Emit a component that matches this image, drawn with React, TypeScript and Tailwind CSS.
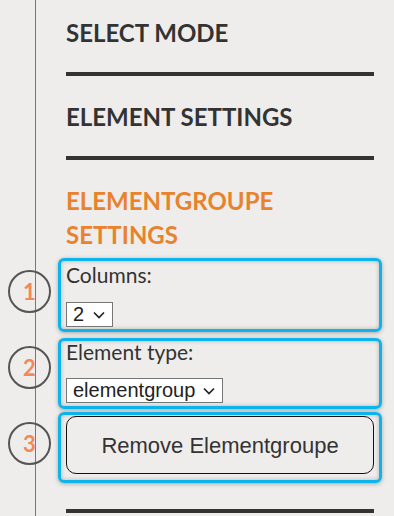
import { useState } from "react";

const MARKERS = [
  { n: "1", top: "top-[270px]" },
  { n: "2", top: "top-[346px]" },
  { n: "3", top: "top-[422px]" },
];

function Chevron() {
  return (
    <svg width="12" height="8" viewBox="0 0 12 8" className="pointer-events-none absolute right-[8px] top-[9px]">
      <path d="M1 1.5l5 5 5-5" fill="none" stroke="#222" strokeWidth="1.7" />
    </svg>
  );
}

export default function App() {
  const [columns, setColumns] = useState("2");
  const [elementType, setElementType] = useState("elementgroup");

  return (
    <div className="relative flex h-[516px] w-[394px] overflow-hidden bg-[#efedeb] font-['Lato',sans-serif] text-[#333]">
      <div className="w-[36px] shrink-0 border-r border-[#777]" />

      <div className="flex flex-1 flex-col pl-[30px] pr-[20px]">
        <section className="pt-[16px] pb-[22px]">
          <h2 className="text-[24px] leading-[34px] font-bold">SELECT MODE</h2>
        </section>
        <div className="h-1 bg-[#333]" />

        <section className="pt-[24px] pb-[22px]">
          <h2 className="text-[24px] leading-[34px] font-bold">ELEMENT SETTINGS</h2>
        </section>
        <div className="h-1 bg-[#333]" />

        <section className="pt-[24px] pb-[6px]">
          <h2 className="text-[24px] leading-[34px] font-bold text-[#e8822c]">
            ELEMENTGROUPE
            <br />
            SETTINGS
          </h2>
        </section>

        <div className="-mx-2 rounded-[6px] border-[3px] border-[#0db4ec] px-[5px] pt-0 pb-[2px] shadow-[inset_0_0_4px_rgba(0,0,0,0.25),0_1px_4px_rgba(0,0,0,0.3)]">
          <label className="block text-[21px] leading-[28px]">Columns:</label>
          <div className="relative mt-[13px] inline-block">
            <select
              value={columns}
              onChange={(e) => setColumns(e.target.value)}
              className="h-[25px] w-[47px] appearance-none border border-[#767676] bg-white pl-[6px] font-['Liberation_Sans',Arial,sans-serif] text-[20px] leading-[23px] text-[#222] outline-none"
            >
              <option>1</option>
              <option>2</option>
              <option>3</option>
            </select>
            <Chevron />
          </div>
        </div>

        <div className="-mx-2 mt-[6px] rounded-[6px] border-[3px] border-[#0db4ec] px-[5px] pt-0 pb-[3px] shadow-[inset_0_0_4px_rgba(0,0,0,0.25),0_1px_4px_rgba(0,0,0,0.3)]">
          <label className="block text-[21px] leading-[22px]">Element type:</label>
          <div className="relative mt-[15px] inline-block">
            <select
              value={elementType}
              onChange={(e) => setElementType(e.target.value)}
              className="h-[25px] w-[157px] appearance-none border border-[#767676] bg-white pl-[6px] font-['Liberation_Sans',Arial,sans-serif] text-[20px] leading-[23px] text-[#222] outline-none"
            >
              <option>element</option>
              <option>elementgroup</option>
            </select>
            <Chevron />
          </div>
        </div>

        <div className="-mx-2 mt-[3px] rounded-[6px] border-[3px] border-[#0db4ec] px-[5px] pt-[1px] pb-[6px] shadow-[inset_0_0_4px_rgba(0,0,0,0.25),0_1px_4px_rgba(0,0,0,0.3)]">
          <button className="flex h-[58px] w-full items-center justify-center rounded-[10px] border border-[#111] bg-[#efedeb] font-['Liberation_Sans',Arial,sans-serif] text-[22px] text-[#333]">
            Remove Elementgroupe
          </button>
        </div>

        <div className="mt-[26px] h-1 shrink-0 bg-[#333]" />
      </div>

      {MARKERS.map((m) => (
        <div
          key={m.n}
          className={`absolute left-[8px] ${m.top} flex h-[43px] w-[43px] items-center justify-center rounded-full border-2 border-[#555] text-[22px] font-bold text-[#f28a52]`}
        >
          {m.n}
        </div>
      ))}
    </div>
  );
}
